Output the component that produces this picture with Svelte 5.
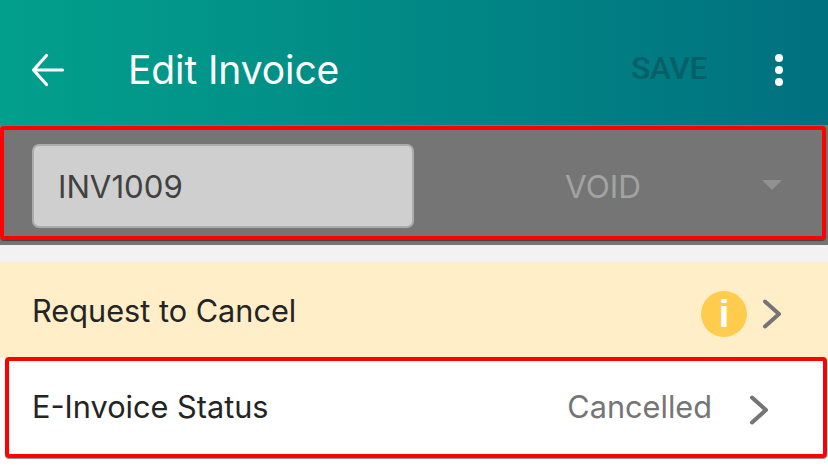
<script>
  const rows = [
    { label: 'Request to Cancel', tone: 'warn' },
    { label: 'E-Invoice Status', value: 'Cancelled', tone: 'plain' }
  ];
</script>

<div class="screen">
  <header class="bar">
    <button class="back" aria-label="Back">
      <svg width="36" height="36" viewBox="0 0 36 36"><path d="M31.500 18H3M15.500 3.500 2.500 18 15.500 32.500" fill="none" stroke="#fff" stroke-width="3.200" stroke-linecap="round" stroke-linejoin="round"/></svg>
    </button>
    <h1>Edit Invoice</h1>
    <span class="save">SAVE</span>
    <span class="more" aria-hidden="true"><i></i><i></i><i></i></span>
  </header>

  <section class="form">
    <div class="field">INV1009</div>
    <div class="status">VOID</div>
    <span class="caret"></span>
    <div class="mark mark-top"></div>
  </section>

  <div class="gap"></div>

  {#each rows as row}
    <div class="row {row.tone}">
      <span class="label">{row.label}</span>
      {#if row.value}<span class="value">{row.value}</span>{/if}
      {#if row.tone === 'warn'}
        <span class="info">i</span>
      {/if}
      <svg class="chev" width="20" height="30" viewBox="0 0 20 30"><path d="M3 2.500 17 15 3 27.500" fill="none" stroke="#757575" stroke-width="4" stroke-linecap="round" stroke-linejoin="round"/></svg>
      {#if row.tone === 'plain'}<div class="mark mark-row"></div>{/if}
    </div>
  {/each}
</div>

<style>
  :global(body) { margin: 0; background: #fff; }
  .screen {
    width: 828px;
    height: 476px;
    overflow: hidden;
    font-family: Inter, "Liberation Sans", sans-serif;
    background: #fff;
  }
  .bar {
    height: 125px;
    display: flex;
    align-items: center;
    padding: 14px 0 0 31px;
    box-sizing: border-box;
    background: linear-gradient(90deg, #02a08c 0%, #00717f 100%);
    color: #fff;
  }
  .back {
    width: 36px; height: 36px; padding: 0; margin: 0;
    border: 0; background: none; display: block;
  }
  h1 {
    margin: 0 0 0 61px;
    font-size: 39px;
    font-weight: 400;
    letter-spacing: -0.1px;
    flex: 1;
  }
  .save {
    font-family: Roboto, sans-serif;
    font-weight: 500;
    font-size: 32px;
    color: #045f69;
    letter-spacing: -0.5px;
    margin-right: 68px;
    margin-top: -3px;
  }
  .more { display: flex; flex-direction: column; gap: 4px; width: 8px; margin-right: 45px; }
  .more i { display: block; width: 8px; height: 8px; border-radius: 50%; background: #fff; }

  .form {
    position: relative;
    height: 120px;
    background: #757575;
    display: flex;
    align-items: flex-start;
    padding: 19px 0 0 32px;
    box-sizing: border-box;
  }
  .field {
    width: 382px;
    height: 84px;
    box-sizing: border-box;
    background: #cfcfcf;
    border: 2px solid #a9abad;
    border-radius: 7px;
    padding-left: 24px;
    line-height: 83px;
    font-size: 31.200px;
    color: #414141;
  }
  .status {
    position: absolute;
    left: 565px;
    top: 20px;
    line-height: 84px;
    font-size: 31.500px;
    color: #a3a3a3;
  }
  .caret {
    position: absolute;
    left: 762px;
    top: 55px;
    width: 0; height: 0;
    border-left: 10px solid transparent;
    border-right: 10px solid transparent;
    border-top: 10px solid #919191;
  }
  .gap { height: 17px; background: #f2f2f2; }
  .row {
    position: relative;
    display: flex;
    align-items: center;
    height: 96px;
    box-sizing: border-box;
    padding-left: 32px;
    font-size: 30.700px;
    color: #242424;
  }
  .warn { background: #ffeec8; padding-top: 8px; }
  .warn .label { margin-top: -7px; }
  .plain { background: #fff; }
  .plain .label, .value { margin-top: 0; }
  .label { flex: 1; }
  .value { color: #757575; margin-right: 37px; }
  .info {
    width: 46px; height: 46px;
    border-radius: 50%;
    background: #ffcc4d;
    color: #fff;
    font: 700 38px/46px "Liberation Sans", sans-serif;
    text-align: center;
    margin-right: 15px;
  }
  .warn .chev { margin-right: 46px; }
  .plain .chev { margin-right: 59px; margin-top: 8px; }
  .mark {
    position: absolute;
    border: 4px solid #f00;
    border-radius: 4px;
    box-sizing: border-box;
    box-shadow: 0 1px 1px rgba(0,0,0,.45);
  }
  .mark-top { left: 0; top: 1px; width: 826px; height: 114px; }
  .mark-row { left: 5px; top: -1px; width: 822px; height: 101px; }
</style>
